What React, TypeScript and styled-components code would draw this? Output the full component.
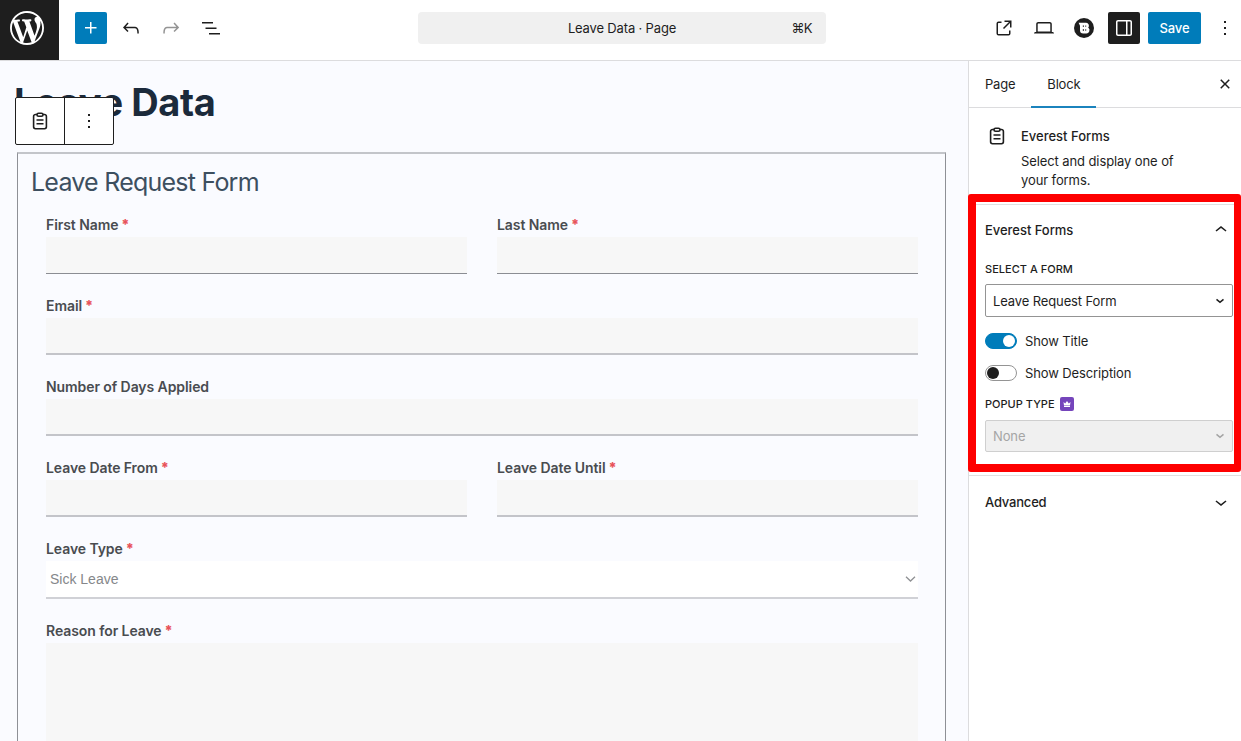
import React from 'react';
import styled, { createGlobalStyle, css } from 'styled-components';

const GlobalStyle = createGlobalStyle`
  *, *::before, *::after { box-sizing: border-box; }
  html, body { margin: 0; padding: 0; overflow: hidden; background: #fff; }
  body { font-family: Inter, "Liberation Sans", sans-serif; font-size: 13px; letter-spacing: -0.08px; color: #1e1e1e; }
  h1, h2, h3, p { margin: 0; }
  button { font: inherit; letter-spacing: inherit; color: inherit; border: 0; padding: 0; background: none; }
`;

const Editor = styled.div`
  display: flex;
  flex-direction: column;
  width: 100vw;
  height: 100vh;
`;

const Header = styled.header`
  display: flex;
  align-items: center;
  flex: none;
  height: 61px;
  padding-bottom: 5px;
  border-bottom: 1px solid #dcdcde;
  background: #fff;
`;

const LogoBox = styled.div`
  display: flex;
  align-items: center;
  justify-content: center;
  align-self: flex-start;
  width: 59px;
  height: 60px;
  padding: 0 5px 4px 0;
  background: #1e1e1e;
  color: #fff;
`;

const ToolGroup = styled.div`
  display: flex;
  gap: 8px;
  margin-left: 16px;
`;

const ToolButton = styled.button<{ $tone?: 'primary' | 'dark' | 'muted' }>`
  display: flex;
  align-items: center;
  justify-content: center;
  width: 32px;
  height: 32px;
  border-radius: 2px;
  ${({ $tone }) => $tone === 'primary' && css`background: #007cba; color: #fff;`}
  ${({ $tone }) => $tone === 'dark' && css`background: #1e1e1e; color: #fff;`}
  ${({ $tone }) => $tone === 'muted' && css`color: #949494;`}
`;

const CommandBar = styled.div`
  display: grid;
  grid-template-columns: 60px 1fr 60px;
  align-items: center;
  width: 408px;
  height: 32px;
  margin-left: 191px;
  padding: 1px 14px 0 0;
  border-radius: 4px;
  background: #f0f0f0;
`;

const CommandTitle = styled.span`
  grid-column: 2;
  padding-left: 14px;
  text-align: center;
  letter-spacing: -0.16px;
`;

const Shortcut = styled.span`
  text-align: right;
  letter-spacing: -0.6px;
`;

const HeaderActions = styled(ToolGroup)`
  margin-left: auto;
  margin-right: 0;
`;

const SaveButton = styled.button`
  width: 53px;
  height: 32px;
  padding-top: 1px;
  border-radius: 2px;
  background: #007cba;
  color: #fff;
  font-weight: 500;
`;

const Body = styled.div`
  display: flex;
  flex: 1;
  min-height: 0;
`;

const Canvas = styled.main`
  flex: 1;
  padding: 16px 22px 0 17px;
  background: #fafbff;
  overflow: hidden;
`;

const TitleArea = styled.div`
  position: relative;
  height: 75px;
`;

const PageTitle = styled.h1`
  margin-left: -3px;
  font-size: 38px;
  line-height: 50px;
  font-weight: 700;
  letter-spacing: -0.4px;
  color: #1b2a3b;
`;

const BlockToolbar = styled.div`
  position: absolute;
  left: -2px;
  top: 20px;
  display: grid;
  grid-template-columns: 48px 49px;
  width: 99px;
  height: 48px;
  border: 1px solid #1e1e1e;
  border-radius: 2px;
  background: #fff;
`;

const ToolbarCell = styled.button`
  display: flex;
  align-items: center;
  justify-content: center;
  & + & { border-left: 1px solid #1e1e1e; }
`;

const FormBlock = styled.section`
  height: 700px;
  padding: 11px 27px 0 13px;
  border: 1px solid #8e9096;
  border-top: 2px solid #c3c5ca;
`;

const FormTitle = styled.h2`
  font-size: 25px;
  line-height: 34px;
  font-weight: 400;
  letter-spacing: -0.77px;
  color: #3d4f5f;
`;

const Fields = styled.div`
  display: grid;
  grid-template-columns: 1fr 1fr;
  column-gap: 30px;
  row-gap: 22px;
  margin-top: 16px;
  padding-left: 15px;
`;

const Field = styled.label<{ $wide?: boolean }>`
  display: flex;
  flex-direction: column;
  ${({ $wide }) => $wide && css`grid-column: 1 / -1;`}
`;

const FieldLabel = styled.span`
  height: 22px;
  line-height: 20px;
  font-size: 14px;
  font-weight: 600;
  color: #494c50;
`;

const Required = styled.span`
  color: #e8535a;
  font-weight: 800;
`;

const TextBox = styled.span<{ $soft?: boolean }>`
  height: 37px;
  background: #f7f7f7;
  border-bottom: ${({ $soft }) => ($soft ? '2px solid #c3c4c9' : '1px solid #8b8d93')};
`;

const Dropdown = styled.span`
  display: flex;
  align-items: center;
  justify-content: space-between;
  height: 38px;
  padding: 0 2px 0 4px;
  background: #fff;
  border-bottom: 2px solid #d0d1d6;
  font-family: "Liberation Sans", Arial, sans-serif;
  font-size: 14px;
  letter-spacing: 0;
  color: #85878a;
`;

const TextArea = styled.span`
  height: 140px;
  background: #f7f7f7;
`;

const Sidebar = styled.aside`
  position: relative;
  flex: none;
  width: 273px;
  border-left: 1px solid #dcdcde;
  background: #fff;
`;

const Tabs = styled.div`
  display: flex;
  height: 47px;
  border-bottom: 1px solid #dcdcde;
`;

const Tab = styled.button<{ $active?: boolean }>`
  height: 47px;
  padding: 0 16px 2px;
  letter-spacing: -0.2px;
  ${({ $active }) => $active && css`box-shadow: inset 0 -2px 0 #1b83bd;`}
`;

const CloseButton = styled.button`
  display: flex;
  align-items: center;
  margin-left: auto;
  padding-right: 4px;
`;

const BlockCard = styled.div`
  display: flex;
  gap: 12px;
  height: 97px;
  padding: 16px 40px 0 16px;
  border-bottom: 1px solid #e0e0e0;
`;

const CardTitle = styled.h2`
  font-size: 13px;
  line-height: 24px;
  font-weight: 500;
  letter-spacing: 0;
`;

const CardText = styled.p`
  margin-top: 4px;
  line-height: 18.5px;
  letter-spacing: -0.1px;
  white-space: nowrap;
`;

const Panel = styled.section<{ $height?: number }>`
  height: ${({ $height }) => ($height ? `${$height}px` : 'auto')};
  padding: 0 8px 0 16px;
  & + & { border-top: 1px solid #e0e0e0; }
`;

const PanelHeader = styled.h3`
  display: flex;
  align-items: center;
  justify-content: space-between;
  height: 50px;
  font-size: 13px;
  font-weight: 500;
  letter-spacing: -0.04px;
`;

const AdvancedHeader = styled(PanelHeader)`
  height: 51px;
  letter-spacing: -0.2px;
`;

const ControlLabel = styled.div<{ $spaced?: boolean }>`
  display: flex;
  align-items: center;
  gap: 5px;
  height: 16px;
  margin-top: ${({ $spaced }) => ($spaced ? '15px' : '6px')};
  margin-bottom: ${({ $spaced }) => ($spaced ? '8px' : '7px')};
  font-size: 11px;
  font-weight: 500;
  letter-spacing: 0.02px;
  text-transform: uppercase;
`;

const Select = styled.div<{ $disabled?: boolean }>`
  display: flex;
  align-items: center;
  justify-content: space-between;
  height: 33px;
  padding: 0 0 0 7px;
  border: 1px solid #949494;
  border-radius: 2px;
  letter-spacing: -0.12px;
  ${({ $disabled }) => $disabled && css`
    height: 32px;
    border-color: #cfcfcf;
    background: #f0f0f0;
    color: #a5a5a5;
  `}
`;

const ToggleRow = styled.div`
  display: flex;
  align-items: center;
  gap: 8px;
  height: 16px;
  margin-top: 16px;
  letter-spacing: -0.12px;
`;

const Track = styled.span<{ $on?: boolean }>`
  display: flex;
  align-items: center;
  justify-content: ${({ $on }) => ($on ? 'flex-end' : 'flex-start')};
  width: 32px;
  height: 16px;
  padding: 0 1px;
  border: 1px solid ${({ $on }) => ($on ? '#007cba' : '#949494')};
  border-radius: 8px;
  background: ${({ $on }) => ($on ? '#007cba' : '#fff')};

  &::after {
    content: '';
    width: 12px;
    height: 12px;
    border-radius: 50%;
    background: ${({ $on }) => ($on ? '#fff' : '#1e1e1e')};
  }
`;

const CrownBadge = styled.span`
  display: flex;
  align-items: center;
  justify-content: center;
  width: 14px;
  height: 14px;
  border-radius: 2px;
  background: #7545bb;
`;

const Highlight = styled.div`
  position: absolute;
  left: -1px;
  top: 133px;
  width: 273px;
  height: 278px;
  border: 8px solid #fe0000;
  border-right-width: 7px;
  border-radius: 3px;
  pointer-events: none;
`;

const icons = {
  plus: 'M11 12.5V17.5H12.5V12.5H17.5V11H12.5V6H11V11H6V12.5H11Z',
  undo: 'M18.3 11.7c-.6-.6-1.4-.9-2.3-.9H6.7l2.9-3.3-1.1-1-4.5 5L8.5 16l1-1-2.7-2.7H16c.5 0 .9.2 1.3.5 1 1 1 3.4 1 4.5v.3h1.5v-.2c0-1.5 0-4.3-1.5-5.7z',
  redo: 'M15.6 6.5l-1.1 1 2.9 3.3H8c-.9 0-1.7.3-2.3.9-1.4 1.5-1.4 4.2-1.4 5.6v.2h1.5v-.3c0-1.1 0-3.5 1-4.5.3-.3.7-.5 1.3-.5h9.2L14.5 15l1.1 1.1 4.6-4.6-4.6-5z',
  list: 'M3 6h11v1.5H3V6Zm3.5 5.5h11V13h-11v-1.5ZM21 17H10v1.5h11V17Z',
  external: 'M19.5 4.5h-7V6h4.44l-5.97 5.97 1.06 1.06L18 7.06v4.44h1.5v-7Zm-13 1a2 2 0 0 0-2 2v10a2 2 0 0 0 2 2h10a2 2 0 0 0 2-2v-3H17v3a.5.5 0 0 1-.5.5h-10a.5.5 0 0 1-.5-.5v-10a.5.5 0 0 1 .5-.5h3V5.5h-3Z',
  desktop: 'M20.5 16h-.7V8c0-1.1-.9-2-2-2H6.2c-1.1 0-2 .9-2 2v8h-.7c-.8 0-1.5.7-1.5 1.5h20c0-.8-.7-1.5-1.5-1.5zM5.7 8c0-.3.2-.5.5-.5h11.6c.3 0 .5.2.5.5v7.6H5.7V8z',
  drawer: 'M18 4H6c-1.1 0-2 .9-2 2v12c0 1.1.9 2 2 2h12c1.1 0 2-.9 2-2V6c0-1.1-.9-2-2-2zm-4 14.5H6c-.3 0-.5-.2-.5-.5V6c0-.3.2-.5.5-.5h8v13zm4.5-.5c0 .3-.2.5-.5.5h-2.5v-13H18c.3 0 .5.2.5.5v12z',
  more: 'M13 19h-2v-2h2v2zm0-6h-2v-2h2v2zm0-6h-2V5h2v2z',
  close: 'M12 13.06l3.712 3.713 1.061-1.06L13.061 12l3.712-3.712-1.06-1.06L12 10.938 8.288 7.227l-1.061 1.06L10.939 12l-3.712 3.712 1.06 1.061L12 13.061z',
  up: 'M6.5 12.4L12 8l5.5 4.4-.9 1.2L12 10l-4.5 3.6-1-1.2z',
  down: 'M17.5 11.6L12 16l-5.5-4.4.9-1.2L12 14l4.5-3.6 1 1.2z',
  downSmall: 'm15.99 10.889-3.988 3.418-3.988-3.418.976-1.14 3.012 2.582 3.012-2.581.976 1.139Z',
};

const Icon = ({ name, size = 24 }: { name: keyof typeof icons; size?: number }) => (
  <svg width={size} height={size} viewBox="0 0 24 24" fill="currentColor" aria-hidden>
    <path d={icons[name]} />
  </svg>
);

const WordPressMark = () => (
  <svg width="34" height="34" viewBox="0 0 20 20" fill="currentColor" aria-hidden>
    <path d="M20 10c0-5.51-4.49-10-10-10C4.48 0 0 4.49 0 10c0 5.52 4.48 10 10 10 5.51 0 10-4.48 10-10zM7.78 15.37L4.37 6.22c.55-.02 1.17-.08 1.17-.08.5-.06.44-1.13-.06-1.11 0 0-1.45.11-2.37.11-.18 0-.37 0-.58-.01C4.12 2.69 6.87 1.11 10 1.11c2.33 0 4.45.87 6.05 2.34-.68-.11-1.65.39-1.65 1.58 0 .74.45 1.36.9 2.1.35.61.55 1.36.55 2.46 0 1.49-1.4 5-1.4 5l-3.03-8.37c.54-.02.82-.17.82-.17.5-.05.44-1.25-.06-1.22 0 0-1.44.12-2.38.12-.87 0-2.33-.12-2.33-.12-.5-.03-.56 1.2-.06 1.22l.92.08 1.26 3.41zM17.41 10c.24-.64.74-1.87.43-4.25.7 1.29 1.05 2.71 1.05 4.25 0 3.29-1.73 6.24-4.4 7.78.97-2.59 1.94-5.2 2.92-7.78zM6.1 18.09C3.12 16.65 1.11 13.53 1.11 10c0-1.3.23-2.48.72-3.59C3.25 10.3 4.67 14.2 6.1 18.09zm4.03-6.63l2.58 6.98c-.86.29-1.76.45-2.71.45-.79 0-1.57-.11-2.29-.33.81-2.38 1.62-4.74 2.42-7.1z" />
  </svg>
);

const BlocksMark = () => (
  <svg width="20" height="20" viewBox="0 0 20 20" aria-hidden>
    <circle cx="10" cy="10" r="10" fill="#1e1e1e" />
    <path d="M4.600 4.800H12a2.800 2.800 0 0 1 2.200 4.700 3.300 3.300 0 0 1-2.500 5.900H9.200A3.200 3.200 0 0 1 6 12.200V7.800z" fill="#fff" />
    <path d="M8.800 8.100h1.200M11.300 8.100h.9M8.800 12h1.200M11.300 12h.9" stroke="#1e1e1e" strokeWidth="1.400" />
  </svg>
);

const Clipboard = () => (
  <svg width="24" height="24" viewBox="0 0 24 24" fill="none" stroke="currentColor" strokeWidth="1.600" aria-hidden>
    <path d="M9 5.500H7.500A1.900 1.900 0 0 0 5.600 7.400v10.400a1.900 1.900 0 0 0 1.900 1.900h9a1.900 1.900 0 0 0 1.900-1.900V7.400a1.900 1.900 0 0 0-1.900-1.900H15" />
    <rect x="9" y="4.200" width="6" height="3" rx="1.500" />
    <path d="M8.500 11h7M8.500 14.800h7" />
  </svg>
);

const SelectArrow = () => (
  <svg width="11" height="6" viewBox="0 0 11 6" fill="none" stroke="#8f9194" strokeWidth="1.300" aria-hidden>
    <path d="M1 .8l4.500 4.200L10 .8" />
  </svg>
);

const Crown = () => (
  <svg width="8" height="8" viewBox="0 0 8 8" fill="#fff" aria-hidden>
    <path d="M0.500 2l1.700 1.400L4 1l1.800 2.400L7.500 2 7 5.500H1zM1 6h6v1H1z" />
  </svg>
);

type FieldSpec = { label: string; required?: boolean; wide?: boolean; soft?: boolean };

const textFields: FieldSpec[] = [
  { label: 'First Name', required: true },
  { label: 'Last Name', required: true },
  { label: 'Email', required: true, wide: true, soft: true },
  { label: 'Number of Days Applied', wide: true, soft: true },
  { label: 'Leave Date From', required: true, soft: true },
  { label: 'Leave Date Until', required: true, soft: true },
];

const Caption = ({ label, required }: FieldSpec) => (
  <FieldLabel>
    {label}
    {required && <Required> *</Required>}
  </FieldLabel>
);

export default function App() {
  return (
    <Editor>
      <GlobalStyle />
      <Header>
        <LogoBox><WordPressMark /></LogoBox>
        <ToolGroup>
          <ToolButton $tone="primary"><Icon name="plus" /></ToolButton>
          <ToolButton><Icon name="undo" /></ToolButton>
          <ToolButton $tone="muted"><Icon name="redo" /></ToolButton>
          <ToolButton><Icon name="list" /></ToolButton>
        </ToolGroup>
        <CommandBar>
          <CommandTitle>Leave Data · Page</CommandTitle>
          <Shortcut>⌘K</Shortcut>
        </CommandBar>
        <HeaderActions>
          <ToolButton><Icon name="external" /></ToolButton>
          <ToolButton><Icon name="desktop" /></ToolButton>
          <ToolButton><BlocksMark /></ToolButton>
          <ToolButton $tone="dark"><Icon name="drawer" /></ToolButton>
          <SaveButton>Save</SaveButton>
          <ToolButton><Icon name="more" /></ToolButton>
        </HeaderActions>
      </Header>
      <Body>
        <Canvas>
          <TitleArea>
            <PageTitle>Leave Data</PageTitle>
            <BlockToolbar>
              <ToolbarCell><Clipboard /></ToolbarCell>
              <ToolbarCell><Icon name="more" /></ToolbarCell>
            </BlockToolbar>
          </TitleArea>
          <FormBlock>
            <FormTitle>Leave Request Form</FormTitle>
            <Fields>
              {textFields.map((field) => (
                <Field key={field.label} $wide={field.wide}>
                  <Caption {...field} />
                  <TextBox $soft={field.soft} />
                </Field>
              ))}
              <Field $wide>
                <Caption label="Leave Type" required />
                <Dropdown>
                  Sick Leave
                  <SelectArrow />
                </Dropdown>
              </Field>
              <Field $wide>
                <Caption label="Reason for Leave" required />
                <TextArea />
              </Field>
            </Fields>
          </FormBlock>
        </Canvas>
        <Sidebar>
          <Tabs>
            <Tab>Page</Tab>
            <Tab $active>Block</Tab>
            <CloseButton><Icon name="close" /></CloseButton>
          </Tabs>
          <BlockCard>
            <Clipboard />
            <div>
              <CardTitle>Everest Forms</CardTitle>
              <CardText>Select and display one of<br />your forms.</CardText>
            </div>
          </BlockCard>
          <Panel $height={270}>
            <PanelHeader>Everest Forms<Icon name="up" /></PanelHeader>
            <ControlLabel>Select a form</ControlLabel>
            <Select>Leave Request Form<Icon name="downSmall" /></Select>
            <ToggleRow><Track $on />Show Title</ToggleRow>
            <ToggleRow><Track />Show Description</ToggleRow>
            <ControlLabel $spaced>Popup type<CrownBadge><Crown /></CrownBadge></ControlLabel>
            <Select $disabled>None<Icon name="downSmall" /></Select>
          </Panel>
          <Panel>
            <AdvancedHeader>Advanced<Icon name="down" /></AdvancedHeader>
          </Panel>
          <Highlight />
        </Sidebar>
      </Body>
    </Editor>
  );
}
